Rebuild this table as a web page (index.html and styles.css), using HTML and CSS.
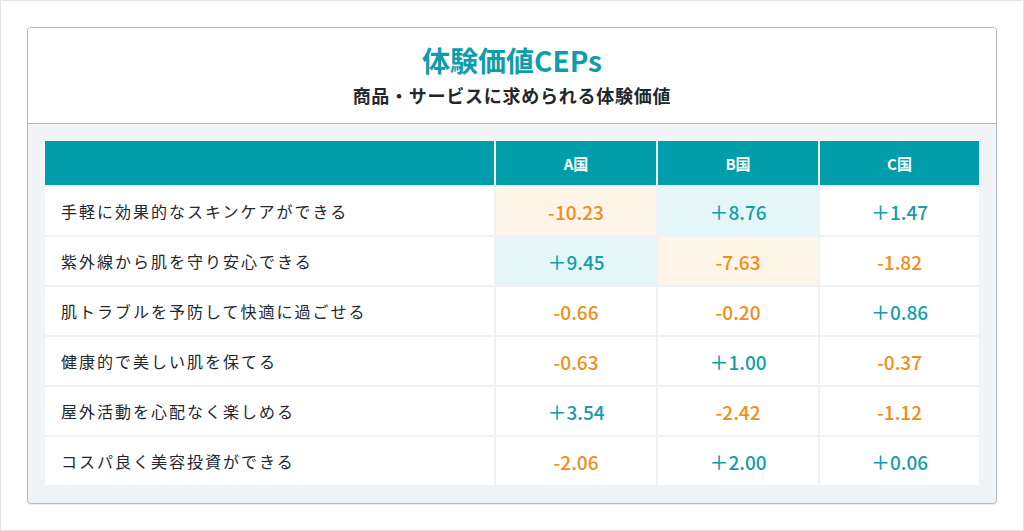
FILE: index.html
```html
<!DOCTYPE html>
<html lang="ja">
<head>
<meta charset="utf-8">
<link rel="stylesheet" href="styles.css">
</head>
<body>
<div class="frame">
  <div class="card">
    <div class="card-head">
      <h1 class="title">体験価値CEPs</h1>
      <p class="subtitle">商品・サービスに求められる体験価値</p>
    </div>
    <div class="card-body">
      <div class="grid">
        <div class="th"></div>
        <div class="th">A国</div>
        <div class="th">B国</div>
        <div class="th">C国</div>

        <div class="label">手軽に効果的なスキンケアができる</div>
        <div class="num neg hl-neg">-10.23</div>
        <div class="num pos hl-pos">＋8.76</div>
        <div class="num pos">＋1.47</div>

        <div class="label">紫外線から肌を守り安心できる</div>
        <div class="num pos hl-pos">＋9.45</div>
        <div class="num neg hl-neg">-7.63</div>
        <div class="num neg">-1.82</div>

        <div class="label">肌トラブルを予防して快適に過ごせる</div>
        <div class="num neg">-0.66</div>
        <div class="num neg">-0.20</div>
        <div class="num pos">＋0.86</div>

        <div class="label">健康的で美しい肌を保てる</div>
        <div class="num neg">-0.63</div>
        <div class="num pos">＋1.00</div>
        <div class="num neg">-0.37</div>

        <div class="label">屋外活動を心配なく楽しめる</div>
        <div class="num pos">＋3.54</div>
        <div class="num neg">-2.42</div>
        <div class="num neg">-1.12</div>

        <div class="label">コスパ良く美容投資ができる</div>
        <div class="num neg">-2.06</div>
        <div class="num pos">＋2.00</div>
        <div class="num pos">＋0.06</div>
      </div>
    </div>
  </div>
</div>
</body>
</html>
```

FILE: styles.css
```css
* { box-sizing: border-box; }
html, body {
  margin: 0;
  padding: 0;
  background: #ffffff;
}
body {
  font-family: "Noto Sans CJK JP", "Noto Sans", sans-serif;
  color: #2b3038;
}
.frame {
  width: 1024px;
  height: 531px;
  border: 1px solid #e2e2e2;
  padding: 26px 26px 0 26px;
}
.card {
  width: 970px;
  height: 477px;
  border: 1px solid #b3b8bf;
  border-radius: 4px;
  overflow: hidden;
  background: #f0f4f7;
  box-shadow: 0 1px 1px rgba(0,0,0,0.08);
}
.card-head {
  height: 96px;
  background: #ffffff;
  border-bottom: 1px solid #b3b8bf;
  display: flex;
  flex-direction: column;
  align-items: center;
  padding-top: 15px;
}
.title {
  margin: 0;
  font-size: 28px;
  line-height: 34px;
  font-weight: 700;
  color: #0e9daa;
}
.subtitle {
  margin: 5px 0 0 0;
  font-size: 18px;
  line-height: 26px;
  font-weight: 700;
  letter-spacing: 0.75px;
  color: #22272e;
}
.card-body {
  padding: 17px 17px 0 17px;
}
.grid {
  display: grid;
  grid-template-columns: 449px 160px 160px 159px;
  grid-template-rows: 44px repeat(6, 48px);
  gap: 2px;
  background: #eef2f5;
  width: 934px;
}
.th {
  background: #019dab;
  color: #ffffff;
  font-size: 15px;
  font-weight: 700;
  display: flex;
  align-items: center;
  justify-content: center;
}
.label {
  background: #ffffff;
  display: flex;
  align-items: center;
  padding-left: 16px;
  font-size: 16px;
  font-weight: 400;
  letter-spacing: 2px;
  color: #23282f;
}
.num {
  background: #ffffff;
  display: flex;
  align-items: center;
  justify-content: center;
  font-size: 19px;
  font-weight: 500;
}
.neg { color: #f28d17; }
.pos { color: #139ea9; }
.hl-neg { background: #fef4e7; }
.hl-pos { background: #e5f6f9; }
```
